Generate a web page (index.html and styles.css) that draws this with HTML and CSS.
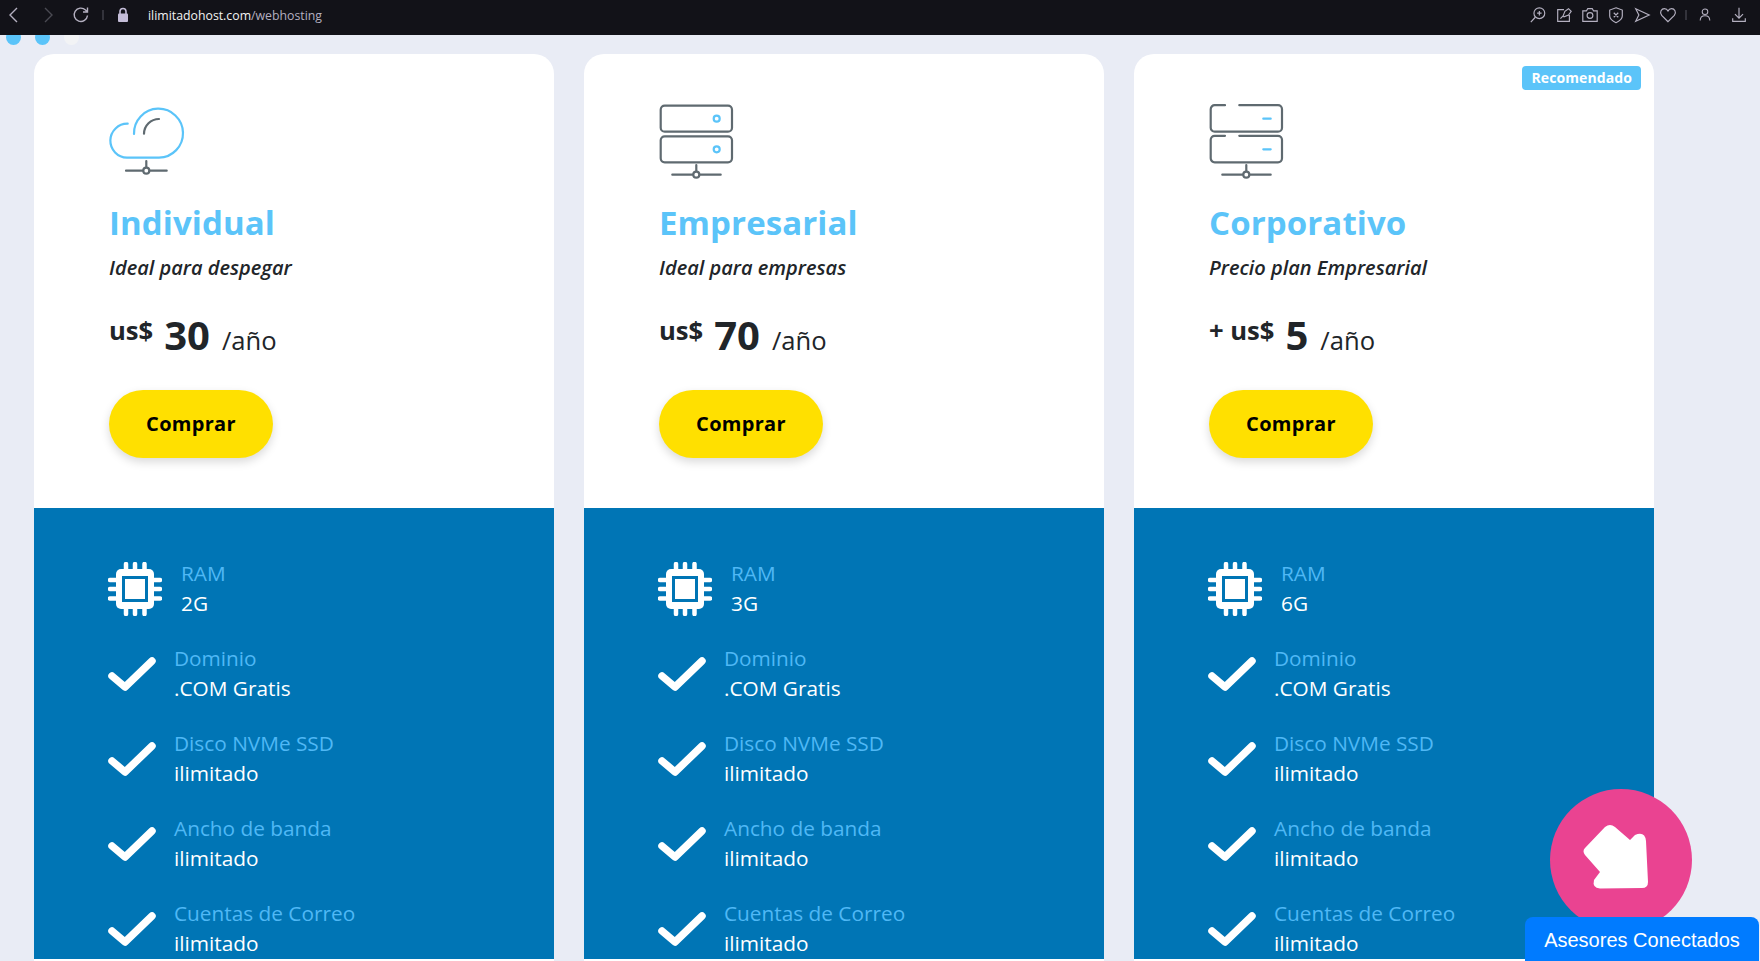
FILE: index.html
```html
<!DOCTYPE html>
<html lang="es">
<head>
    <meta charset="UTF-8">
    <meta name="viewport" content="width=device-width, initial-scale=1.0">
    <title>Web Hosting - ilimitadohost.com</title>
    <link rel="stylesheet" href="styles.css">
</head>
<body>
    <svg class="sprite" width="0" height="0">
        <defs>
            <symbol id="cpu" viewBox="0 0 54 54">
                <path class="pins" d="M18 2v6M27 2v6M36.500 2v6M18 46v6M27 46v6M36.500 46v6M2 18h6M2 27h6M2 36.500h6M46 18h6M46 27h6M46 36.500h6"/>
                <rect class="cpu-body" x="8" y="7" width="38" height="40" rx="5"/>
                <rect class="cpu-hole" x="14" y="14" width="26" height="26"/>
                <rect class="cpu-body" x="17" y="17" width="20" height="20"/>
            </symbol>
            <symbol id="check" viewBox="0 0 48 36">
                <path class="check-line" d="M4 20 L17 31 L44 5"/>
            </symbol>
        </defs>
    </svg>

    <header class="browser-bar">
        <svg class="bar-icon" viewBox="0 0 20 20"><path d="M13 3 L6 10 L13 17"/></svg>
        <svg class="bar-icon dim forward" viewBox="0 0 20 20"><path d="M7 3 L14 10 L7 17"/></svg>
        <svg class="bar-icon reload" viewBox="0 0 20 20"><path d="M16.500 10.500 A6.700 6.700 0 1 1 14.500 5 L16.500 7 M16.500 2.500 V7 H12"/></svg>
        <span class="bar-dots"></span>
        <svg class="lock" viewBox="0 0 14 16"><path class="lock-arc" d="M4 7V4.500a3 3 0 0 1 6 0V7"/><rect x="2" y="6.500" width="10" height="8.500" rx="1"/></svg>
        <div class="url"><span class="host">ilimitadohost.com</span>/webhosting</div>
        <div class="bar-tools">
            <svg class="bar-icon small" viewBox="0 0 20 20"><circle cx="11.500" cy="8" r="6"/><path d="M7 12.500 L2 18 M11.500 5.500v5M9 8h5"/></svg>
            <svg class="bar-icon small" viewBox="0 0 20 20"><path d="M10 4H3v13h13v-7M9 11l2-5 4-3 3 3-3 4-5 2zM6 14l3-3"/></svg>
            <svg class="bar-icon small" viewBox="0 0 20 20"><path d="M2 5.500h4l1.500-2.500h5L14 5.500h4V17H2z"/><circle cx="10" cy="10.500" r="3.200"/></svg>
            <svg class="bar-icon small" viewBox="0 0 20 20"><path d="M10 2 L17 4.500 V11 C17 14.500 13 17 10 18.500 C7 17 3 14.500 3 11 V4.500z M7.500 7.500 L12.500 12.500 M12.500 7.500 L7.500 12.500"/></svg>
            <svg class="bar-icon small" viewBox="0 0 20 20"><path d="M3 3 L18 10 L3 17 L6.500 10z"/></svg>
            <svg class="bar-icon small" viewBox="0 0 20 20"><path d="M10 17.500 L3 10.500 C0 6.500 3 3 6 3 C8 3 9.500 4.500 10 5.500 C10.500 4.500 12 3 14 3 C17 3 20 6.500 17 10.500z"/></svg>
            <span class="bar-dots"></span>
            <svg class="bar-icon small user" viewBox="0 0 20 20"><circle cx="10" cy="6" r="3.500"/><path d="M4 17 C4 12.500 7 11 10 11 C13 11 16 12.500 16 17"/></svg>
            <svg class="bar-icon small download" viewBox="0 0 20 20"><path d="M10 2v11M5.500 9 L10 13.500 L14.500 9M3 13.500V17h14v-3.500"/></svg>
        </div>
    </header>

    <div class="slider-dots">
        <span class="dot"></span>
        <span class="dot"></span>
        <span class="dot dot-light"></span>
    </div>

    <main class="plans">
        <section class="plan">
            <div class="plan-top">
                <svg class="plan-icon" viewBox="0 0 80 80">
                    <path class="blue-line" d="M18.700 23.700 A17 17 0 0 0 18 57.700 H50 A24.500 24.500 0 1 0 25 34"/>
                    <path class="gray-line" d="M35 33.700 A15 15 0 0 1 50 19 M37.300 61v7 M17 70.700 H57.700"/>
                    <circle class="gray-line node" cx="37.300" cy="70.700" r="3"/>
                </svg>
                <h2>Individual</h2>
                <p class="tagline">Ideal para despegar</p>
                <div class="price"><span class="currency">us$</span><span class="amount">30</span><span class="period">/año</span></div>
                <a class="buy-btn" href="#">Comprar</a>
            </div>
            <ul class="features">
                <li class="ram"><svg class="cpu-icon"><use href="#cpu"/></svg><div><span>RAM</span><strong>2G</strong></div></li>
                <li><svg class="check-icon"><use href="#check"/></svg><div><span>Dominio</span><strong>.COM Gratis</strong></div></li>
                <li><svg class="check-icon"><use href="#check"/></svg><div><span>Disco NVMe SSD</span><strong>ilimitado</strong></div></li>
                <li><svg class="check-icon"><use href="#check"/></svg><div><span>Ancho de banda</span><strong>ilimitado</strong></div></li>
                <li><svg class="check-icon"><use href="#check"/></svg><div><span>Cuentas de Correo</span><strong>ilimitado</strong></div></li>
            </ul>
        </section>

        <section class="plan">
            <div class="plan-top">
                <svg class="plan-icon" viewBox="0 0 80 80">
                    <rect class="gray-line" x="1.700" y="5.700" width="71.300" height="26" rx="4"/>
                    <rect class="gray-line" x="1.700" y="36.300" width="71.300" height="26" rx="4"/>
                    <circle class="blue-line" cx="57.700" cy="18.700" r="3"/>
                    <circle class="blue-line" cx="57.700" cy="49.300" r="3"/>
                    <path class="gray-line" d="M37.300 65v7 M13.300 74.700 H61.700"/>
                    <circle class="gray-line node" cx="37.300" cy="74.700" r="3"/>
                </svg>
                <h2>Empresarial</h2>
                <p class="tagline">Ideal para empresas</p>
                <div class="price"><span class="currency">us$</span><span class="amount">70</span><span class="period">/año</span></div>
                <a class="buy-btn" href="#">Comprar</a>
            </div>
            <ul class="features">
                <li class="ram"><svg class="cpu-icon"><use href="#cpu"/></svg><div><span>RAM</span><strong>3G</strong></div></li>
                <li><svg class="check-icon"><use href="#check"/></svg><div><span>Dominio</span><strong>.COM Gratis</strong></div></li>
                <li><svg class="check-icon"><use href="#check"/></svg><div><span>Disco NVMe SSD</span><strong>ilimitado</strong></div></li>
                <li><svg class="check-icon"><use href="#check"/></svg><div><span>Ancho de banda</span><strong>ilimitado</strong></div></li>
                <li><svg class="check-icon"><use href="#check"/></svg><div><span>Cuentas de Correo</span><strong>ilimitado</strong></div></li>
            </ul>
        </section>

        <section class="plan">
            <span class="badge">Recomendado</span>
            <div class="plan-top">
                <svg class="plan-icon" viewBox="0 0 80 80">
                    <path class="gray-line" d="M16 5.200 H5.700 A4 4 0 0 0 1.700 9.200 V27.700 A4 4 0 0 0 5.700 31.700 H69 A4 4 0 0 0 73 27.700 V9.200 A4 4 0 0 0 69 5.200 H30.300"/>
                    <path class="gray-line" d="M16 35.800 H5.700 A4 4 0 0 0 1.700 39.800 V58.300 A4 4 0 0 0 5.700 62.300 H69 A4 4 0 0 0 73 58.300 V39.800 A4 4 0 0 0 69 35.800 H30.300"/>
                    <path class="blue-line" d="M54.300 18.700 H61.700 M54.300 49.300 H61.700"/>
                    <path class="gray-line" d="M37.300 65v7 M13.300 74.700 H61.700"/>
                    <circle class="gray-line node" cx="37.300" cy="74.700" r="3"/>
                </svg>
                <h2>Corporativo</h2>
                <p class="tagline">Precio plan Empresarial</p>
                <div class="price"><span class="currency">+ us$</span><span class="amount">5</span><span class="period">/año</span></div>
                <a class="buy-btn" href="#">Comprar</a>
            </div>
            <ul class="features">
                <li class="ram"><svg class="cpu-icon"><use href="#cpu"/></svg><div><span>RAM</span><strong>6G</strong></div></li>
                <li><svg class="check-icon"><use href="#check"/></svg><div><span>Dominio</span><strong>.COM Gratis</strong></div></li>
                <li><svg class="check-icon"><use href="#check"/></svg><div><span>Disco NVMe SSD</span><strong>ilimitado</strong></div></li>
                <li><svg class="check-icon"><use href="#check"/></svg><div><span>Ancho de banda</span><strong>ilimitado</strong></div></li>
                <li><svg class="check-icon"><use href="#check"/></svg><div><span>Cuentas de Correo</span><strong>ilimitado</strong></div></li>
            </ul>
        </section>
    </main>

    <a class="float-btn" href="#">
        <svg viewBox="-1 -1 67 66"><path d="M2 24 L22 3 Q27 -1 32 3 L47 16 L52 11 Q62 7 63 17 L65 58 Q65 64 59 64 L17 64.500 Q9 64 11 56 L17 48 L2 31 Q-1 27 2 24z"/></svg>
    </a>
    <div class="chat-tab">Asesores Conectados</div>
</body>
</html>
```

FILE: styles.css
```css
html {
    overflow: hidden;
}
body {
    margin: 0;
    height: 961px;
    overflow: hidden;
    background-color: #e9ecf5;
    font-family: "Open Sans", Arial, sans-serif;
    color: #212529;
}
.sprite {
    display: block;
    height: 0;
}

/* browser bar */
.browser-bar {
    position: relative;
    z-index: 2;
    display: flex;
    align-items: center;
    height: 35px;
    padding: 0 12px 5px 4px;
    box-sizing: border-box;
    background-color: #121218;
}
.bar-icon {
    width: 20px;
    height: 20px;
    fill: none;
    stroke: #b4b0c0;
    stroke-width: 1.4;
}
.bar-icon.dim {
    stroke: #4a4a52;
}
.forward {
    margin-left: 14px;
}
.reload {
    margin-left: 13px;
}
.bar-dots {
    width: 2px;
    height: 10px;
    margin-left: 11px;
    background-image: radial-gradient(#33333b 1px, transparent 1px);
    background-size: 2px 4px;
}
.lock {
    width: 14px;
    height: 16px;
    margin-left: 12px;
    fill: #c4bdd8;
}
.lock-arc {
    fill: none;
    stroke: #c4bdd8;
    stroke-width: 1.6;
}
.url {
    margin-left: 18px;
    font-size: 12.300px;
    color: #b4b0c0;
}
.host {
    color: #f2f2f2;
}
.bar-tools {
    display: flex;
    align-items: center;
    gap: 8px;
    margin-left: auto;
}
.bar-tools .bar-dots {
    margin-left: 0;
}
.small {
    width: 18px;
    height: 18px;
    stroke-width: 1.3;
}
.user {
    margin-left: 2px;
    width: 16px;
}
.download {
    margin-left: 9px;
}

/* slider dots, half hidden under the bar */
.slider-dots {
    display: flex;
    gap: 14px;
    height: 15px;
    margin: -5px 0 9px 6px;
}
.dot {
    width: 15px;
    height: 15px;
    border-radius: 50%;
    background-color: #5bc4f9;
}
.dot-light {
    background-color: #f2f3f5;
}

/* plans */
.plans {
    display: flex;
    gap: 30px;
    height: 910px;
    padding-left: 34px;
    overflow: hidden;
}
.plan {
    position: relative;
    width: 520px;
    border-radius: 20px 20px 0 0;
    overflow: hidden;
    background-color: white;
}
.badge {
    position: absolute;
    top: 12px;
    right: 13px;
    padding: 0 9px;
    height: 24px;
    line-height: 24px;
    border-radius: 4px;
    background-color: #5bc4f9;
    color: white;
    font-size: 14px;
    font-weight: 700;
    letter-spacing: 0.1px;
}
.plan-top {
    padding: 46px 0 50px 75px;
}
.plan-icon {
    display: block;
    width: 80px;
    height: 80px;
    overflow: visible;
    fill: none;
}
.blue-line {
    fill: none;
    stroke: #5bc4f9;
    stroke-width: 2.200;
    stroke-linecap: round;
}
.gray-line {
    fill: none;
    stroke: #5f6a70;
    stroke-width: 2.200;
    stroke-linecap: round;
}
.node {
    fill: white;
}
h2 {
    margin: 20px 0 0;
    font-size: 33px;
    line-height: 45px;
    font-weight: 700;
    letter-spacing: 0.1px;
    color: #5bc4f9;
}
.tagline {
    margin: 10px 0 0;
    font-size: 20px;
    line-height: 26px;
    font-style: italic;
    font-weight: 600;
    color: #212529;
}
.price {
    display: flex;
    align-items: baseline;
    margin-top: 24px;
    height: 60px;
}
.currency {
    font-size: 25.600px;
    font-weight: 700;
    position: relative;
    top: -10px;
}
.amount {
    margin-left: 11px;
    font-size: 40px;
    line-height: 60px;
    font-weight: 700;
}
.period {
    margin-left: 12px;
    font-size: 25.600px;
    font-weight: 400;
}
.buy-btn {
    display: block;
    width: 164px;
    height: 68px;
    margin-top: 25px;
    border-radius: 34px;
    background-color: #ffe000;
    box-shadow: 0 4px 10px rgba(0, 0, 0, 0.15);
    color: black;
    font-size: 20px;
    font-weight: 700;
    line-height: 68px;
    text-align: center;
    text-decoration: none;
    letter-spacing: 0.3px;
}
.features {
    list-style: none;
    margin: 0;
    padding: 51px 0 0 75px;
    background-color: #0075b5;
}
.features li {
    display: flex;
    align-items: center;
    gap: 18px;
    height: 60px;
    margin-bottom: 25px;
}
.features li.ram {
    gap: 19px;
}
.features li div {
    margin-top: -3px;
}
.features span,
.features strong {
    display: block;
    font-size: 20.800px;
    line-height: 30px;
    font-weight: 400;
}
.features span {
    color: #4fb8f5;
}
.features strong {
    color: white;
}
.cpu-icon {
    width: 54px;
    height: 54px;
    margin-left: -1px;
}
.check-icon {
    width: 48px;
    height: 36px;
    margin-left: -1px;
}
.pins {
    fill: none;
    stroke: white;
    stroke-width: 4.500;
    stroke-linecap: round;
}
.cpu-body {
    fill: white;
}
.cpu-hole {
    fill: #0075b5;
}
.check-line {
    fill: none;
    stroke: white;
    stroke-width: 7.500;
    stroke-linecap: round;
    stroke-linejoin: round;
}

/* floating widgets */
.float-btn {
    position: fixed;
    left: 1550px;
    top: 789px;
    width: 142px;
    height: 142px;
    border-radius: 50%;
    background-color: #ea4391;
    display: flex;
    align-items: center;
    justify-content: center;
}
.float-btn svg {
    width: 67px;
    height: 66px;
    margin: 0 11px 9px 0;
    fill: white;
}
.chat-tab {
    position: fixed;
    left: 1525px;
    top: 917px;
    width: 234px;
    height: 44px;
    padding-top: 2px;
    box-sizing: border-box;
    border-radius: 8px 8px 0 0;
    background-color: #007bff;
    color: white;
    font-family: "Liberation Sans", Arial, sans-serif;
    font-size: 20px;
    line-height: 42px;
    text-align: center;
}
```
